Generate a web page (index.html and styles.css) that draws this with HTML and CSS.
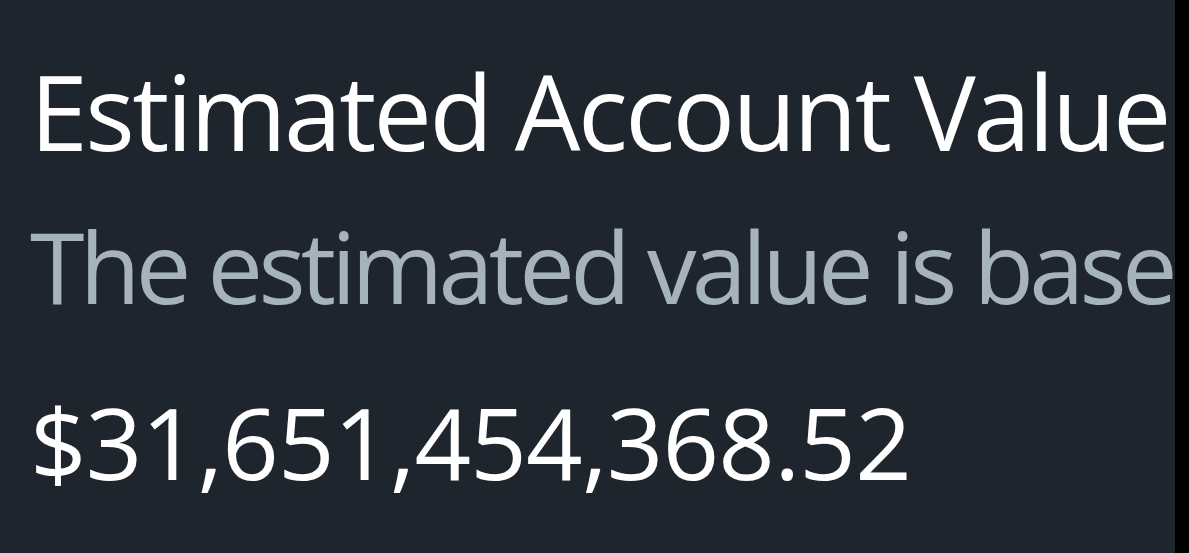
FILE: index.html
```html
<!DOCTYPE html>
<html lang="en">

<head>
  <meta charset="UTF-8">
  <meta name="viewport" content="width=device-width, initial-scale=1.0">
  <title>Estimated Account Value</title>
  <link rel="stylesheet" href="styles.css">
</head>

<body>
  <div class="panel">
    <h1 class="title">Estimated Account Value</h1>
    <p class="subtitle">The estimated value is based on the latest prices</p>
    <p class="amount">$31,651,454,368.52</p>
  </div>
</body>

</html>
```

FILE: styles.css
```css
html,
body {
  margin: 0;
  height: 100%;
  background-color: #000;
}

body {
  font-family: "Open Sans", "Noto Sans", sans-serif;
  overflow: hidden;
}

.panel {
  width: 1175px;
  height: 100%;
  background-color: #1e252d;
  padding: 59px 0 0 30px;
  box-sizing: border-box;
  overflow: hidden;
  white-space: nowrap;
}

.title {
  margin: 0;
  font-size: 104px;
  font-weight: 400;
  line-height: 1;
  letter-spacing: -2.6px;
  color: #fff;
}

.subtitle {
  margin: 53px 0 0;
  font-size: 99px;
  line-height: 1;
  letter-spacing: -4.75px;
  color: #a6b2bc;
}

.amount {
  margin: 77px 0 0;
  font-size: 99px;
  line-height: 1;
  letter-spacing: -0.8px;
  color: #fff;
}
```
